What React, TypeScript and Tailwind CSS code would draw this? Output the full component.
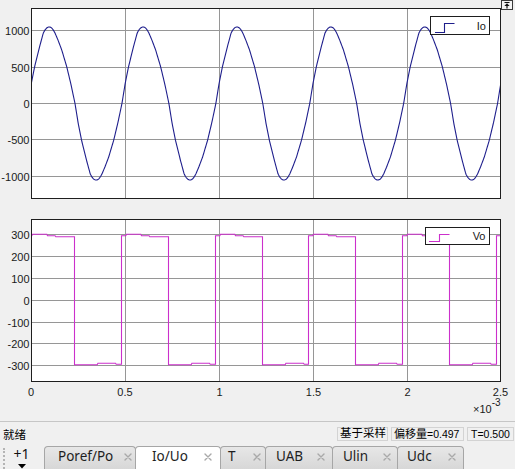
import React from "react";

const P = 93.9;
const H = P / 2;

const IO_KEYS: [number, number][] = [
  [0, 1050], [1.3, 1047], [2.7, 1036], [4.3, 1008], [6, 967], [9, 870], [12.7, 736],
  [17.7, 506], [22, 260], [26, 0], [29.3, -280], [32.6, -506], [34.3, -600],
  [37.6, -782], [41.25, -967], [43, -1010], [44.65, -1036], [45.8, -1046], [H, -1050],
];

function g(s: number): number {
  for (let i = 0; i < IO_KEYS.length - 1; i++) {
    const [s0, v0] = IO_KEYS[i];
    const [s1, v1] = IO_KEYS[i + 1];
    if (s >= s0 && s <= s1) {
      const t = (s - s0) / (s1 - s0);
      return v0 + (v1 - v0) * t;
    }
  }
  return IO_KEYS[IO_KEYS.length - 1][1];
}

function io(x: number): number {
  const s = (((x - 49) % P) + P) % P;
  return s < H ? g(s) : -g(s - H);
}

function ioPath(): string {
  const pts: string[] = [];
  for (let x = 30; x <= 502; x += 0.5) {
    const y = 103.5 - io(x) * 0.0729;
    pts.push(`${x.toFixed(1)},${y.toFixed(2)}`);
  }
  return "M" + pts.join(" L");
}

function voPath(): string {
  const rises = [27.5, 121.5, 215.5, 308.5, 402.5, 496.5];
  const d: string[] = [];
  const pt = (x: number, y: number) => d.push(`${x.toFixed(1)},${(y - 210).toFixed(2)}`);
  rises.forEach((r, k) => {
    const f = r + 47;
    if (k > 0) pt(r, 364.3);
    pt(r, 235.7);
    pt(r + 4.3, 235.7);
    pt(r + 5, 234.3);
    pt(r + 19.3, 234.3);
    pt(r + 20, 235.7);
    pt(r + 27.6, 235.7);
    pt(r + 28.3, 236.7);
    pt(f, 236.7);
    if (k < rises.length - 1) {
      pt(f, 364.7);
      pt(f + 22.7, 364.7);
      pt(f + 23.4, 363.3);
      pt(f + 41, 363.3);
      pt(f + 41.7, 364.3);
    }
  });
  return "M" + d.join(" L");
}

const GRID = "#969696";
const AXIS = "#1e1e1e";
const LBL = "#1a1a1a";
const FONT = "'Liberation Sans', Arial, sans-serif";
const VX = [125.5, 219.5, 313.5, 407.5];

function TopPlot() {
  const hy = [
    { y: 30.5, t: "1000" },
    { y: 67.5, t: "500" },
    { y: 103.5, t: "0" },
    { y: 139.5, t: "-500" },
    { y: 176.5, t: "-1000" },
  ];
  return (
    <svg width={515} height={210} className="block">
      <defs>
        <clipPath id="clipTop">
          <rect x={31.5} y={8.5} width={469} height={190} />
        </clipPath>
      </defs>
      <rect x={31.5} y={8.5} width={469} height={190} fill="#ffffff" />
      {hy.map((h) => (
        <line key={h.t} x1={31.5} x2={500.5} y1={h.y} y2={h.y} stroke={GRID} strokeWidth={1} />
      ))}
      {VX.map((x) => (
        <line key={x} x1={x} x2={x} y1={8.5} y2={198.5} stroke={GRID} strokeWidth={1} />
      ))}
      <path d={ioPath()} fill="none" stroke="#1e1e8c" strokeWidth={1.1} clipPath="url(#clipTop)" strokeLinejoin="round" />
      <rect x={31.5} y={8.5} width={469} height={190} fill="none" stroke={AXIS} strokeWidth={1} />
      {hy.map((h) => (
        <text key={h.t} x={29.5} y={h.y + 4} textAnchor="end" fontSize={11} fontFamily={FONT} fill={LBL}>
          {h.t}
        </text>
      ))}
      <rect x={430.5} y={16.5} width={59} height={18} fill="#ffffff" stroke={AXIS} strokeWidth={1} />
      <path d="M435,32.5 H444.5 V23.5 H454.5" fill="none" stroke="#1e1e8c" strokeWidth={1.1} />
      <text x={486} y={30} textAnchor="end" fontSize={11} fontFamily={FONT} fill={LBL}>
        Io
      </text>
    </svg>
  );
}

function BottomPlot() {
  const hy = [
    { y: 24.5, t: "300" },
    { y: 46.5, t: "200" },
    { y: 68.5, t: "100" },
    { y: 90.5, t: "0" },
    { y: 112.5, t: "-100" },
    { y: 133.5, t: "-200" },
    { y: 155.5, t: "-300" },
  ];
  const xl = [
    { x: 31, t: "0" },
    { x: 125, t: "0.5" },
    { x: 219.5, t: "1" },
    { x: 313.5, t: "1.5" },
    { x: 407.5, t: "2" },
    { x: 500.5, t: "2.5" },
  ];
  return (
    <svg width={515} height={211} className="block">
      <defs>
        <clipPath id="clipBot">
          <rect x={31.5} y={9.5} width={469} height={162} />
        </clipPath>
      </defs>
      <rect x={31.5} y={9.5} width={469} height={162} fill="#ffffff" />
      {hy.map((h) => (
        <line key={h.t} x1={31.5} x2={500.5} y1={h.y} y2={h.y} stroke={GRID} strokeWidth={1} />
      ))}
      {VX.map((x) => (
        <line key={x} x1={x} x2={x} y1={9.5} y2={171.5} stroke={GRID} strokeWidth={1} />
      ))}
      <path d={voPath()} fill="none" stroke="#cc30cc" strokeWidth={1.1} clipPath="url(#clipBot)" />
      <rect x={31.5} y={9.5} width={469} height={162} fill="none" stroke={AXIS} strokeWidth={1} />
      {hy.map((h) => (
        <text key={h.t} x={29.5} y={h.y + 4} textAnchor="end" fontSize={11} fontFamily={FONT} fill={LBL}>
          {h.t}
        </text>
      ))}
      {xl.map((l) => (
        <text key={l.t} x={l.x} y={185.5} textAnchor="middle" fontSize={11} fontFamily={FONT} fill={LBL}>
          {l.t}
        </text>
      ))}
      <text x={473} y={203.3} fontSize={11} fontFamily={FONT} fill={LBL}>
        ×10
        <tspan dy={-7} fontSize={10}>
          -3
        </tspan>
      </text>
      <rect x={425.5} y={17.5} width={64} height={17} fill="#ffffff" stroke={AXIS} strokeWidth={1} />
      <path d="M429,31.5 H439.5 V24.5 H449.5" fill="none" stroke="#cc30cc" strokeWidth={1.1} />
      <text x={485.5} y={30} textAnchor="end" fontSize={11} fontFamily={FONT} fill={LBL}>
        Vo
      </text>
    </svg>
  );
}

function CloseX() {
  return (
    <svg width={8} height={8} viewBox="0 0 8 8" className="block shrink-0">
      <path d="M1,1 L7,7 M7,1 L1,7" stroke="#a9a9a9" strokeWidth={1.4} strokeLinecap="round" />
    </svg>
  );
}

type TabDef = { label: string; w: string; pl: string; pr: string; active?: boolean };

const TABS: TabDef[] = [
  { label: "Poref/Po", w: "w-[92px]", pl: "pl-[13px]", pr: "pr-[3px]" },
  { label: "Io/Uo", w: "w-[86px]", pl: "pl-[16px]", pr: "pr-[8px]", active: true },
  { label: "T", w: "w-[46px]", pl: "pl-[7px]", pr: "pr-[4px]" },
  { label: "UAB", w: "w-[68px]", pl: "pl-[10px]", pr: "pr-[7px]" },
  { label: "Ulin", w: "w-[66px]", pl: "pl-[10px]", pr: "pr-[6px]" },
  { label: "Udc", w: "w-[67px]", pl: "pl-[9px]", pr: "pr-[7px]" },
];

export default function App() {
  return (
    <div className="relative flex h-[469px] w-[515px] flex-col overflow-hidden bg-[#f0f0f0]">
      <div className="relative h-[210px] shrink-0">
        <TopPlot />
        <div className="absolute left-[501px] top-0 h-[10px] w-[12px]">
          <svg width={12} height={10} viewBox="0 0 12 10" className="block">
            <rect x={0.5} y={0.5} width={11} height={9} fill="#f4f4f4" stroke="#3a3a3a" strokeWidth={1} />
            <path d="M3.5,2.5 H8.5" stroke="#111" strokeWidth={1} />
            <path d="M6,3.2 L3.4,6 H8.6 Z" fill="#111" />
            <path d="M6,5.5 V8.5" stroke="#111" strokeWidth={1.2} />
          </svg>
        </div>
      </div>
      <div className="h-[211px] shrink-0">
        <BottomPlot />
      </div>
      <div className="flex h-[24px] shrink-0 border-t border-[#c6c6c6]">
        <div className="mt-[5px] pl-[3px] font-['Noto_Sans_CJK_SC',sans-serif] text-[11.5px] leading-[14px] text-black">
          就绪
        </div>
        <div className="ml-auto mr-[1px] mt-[5px] flex gap-[3px] font-['Liberation_Sans','Noto_Sans_CJK_SC',sans-serif] text-[10.5px] text-black">
          <div className="flex h-[14px] w-[51px] items-center border border-[#d3d3d3] pl-[2px] leading-none">
            <span className="text-[11.5px]">基于采样</span>
          </div>
          <div className="flex h-[14px] w-[73px] items-center border border-[#d3d3d3] pl-[2px] leading-none whitespace-nowrap">
            <span className="text-[11px]">偏移量</span>
            <span>=0.497</span>
          </div>
          <div className="flex h-[14px] w-[47px] items-center border border-[#d3d3d3] pl-[3px] leading-none">
            T=0.500
          </div>
        </div>
      </div>
      <div className="flex h-[24px] shrink-0 items-end font-['Noto_Sans',sans-serif]">
        <div className="flex h-full w-[44px] shrink-0 items-start">
          <div className="ml-[3px] mt-[3px] h-[21px] w-0 border-l-2 border-dotted border-[#b4b4b4]" />
          <div className="flex w-[33px] flex-col items-center pt-[1px]">
            <span className="text-[14px] leading-[16px] text-[#111]">+1</span>
            <svg width={8} height={5} viewBox="0 0 8 5" className="mt-[2px] block">
              <path d="M0,0 H8 L4,4.5 Z" fill="#000" />
            </svg>
          </div>
        </div>
        {TABS.map((t, i) => (
          <div
            key={t.label}
            className={
              "relative flex h-[23px] shrink-0 items-start rounded-t-[4px] border-x border-t border-[#a6a6a6] pt-[2px] " +
              t.w +
              " " +
              t.pl +
              " " +
              t.pr +
              (i > 0 ? " -ml-px" : "") +
              (t.active ? " z-10 bg-white" : " bg-linear-to-b from-[#e7e7e7] to-[#d7d7d7]")
            }
          >
            <span className="whitespace-nowrap text-[13.5px] leading-[15px] text-[#1e1e1e]">{t.label}</span>
            <span className="ml-auto mt-[4px]">
              <CloseX />
            </span>
          </div>
        ))}
      </div>
    </div>
  );
}
